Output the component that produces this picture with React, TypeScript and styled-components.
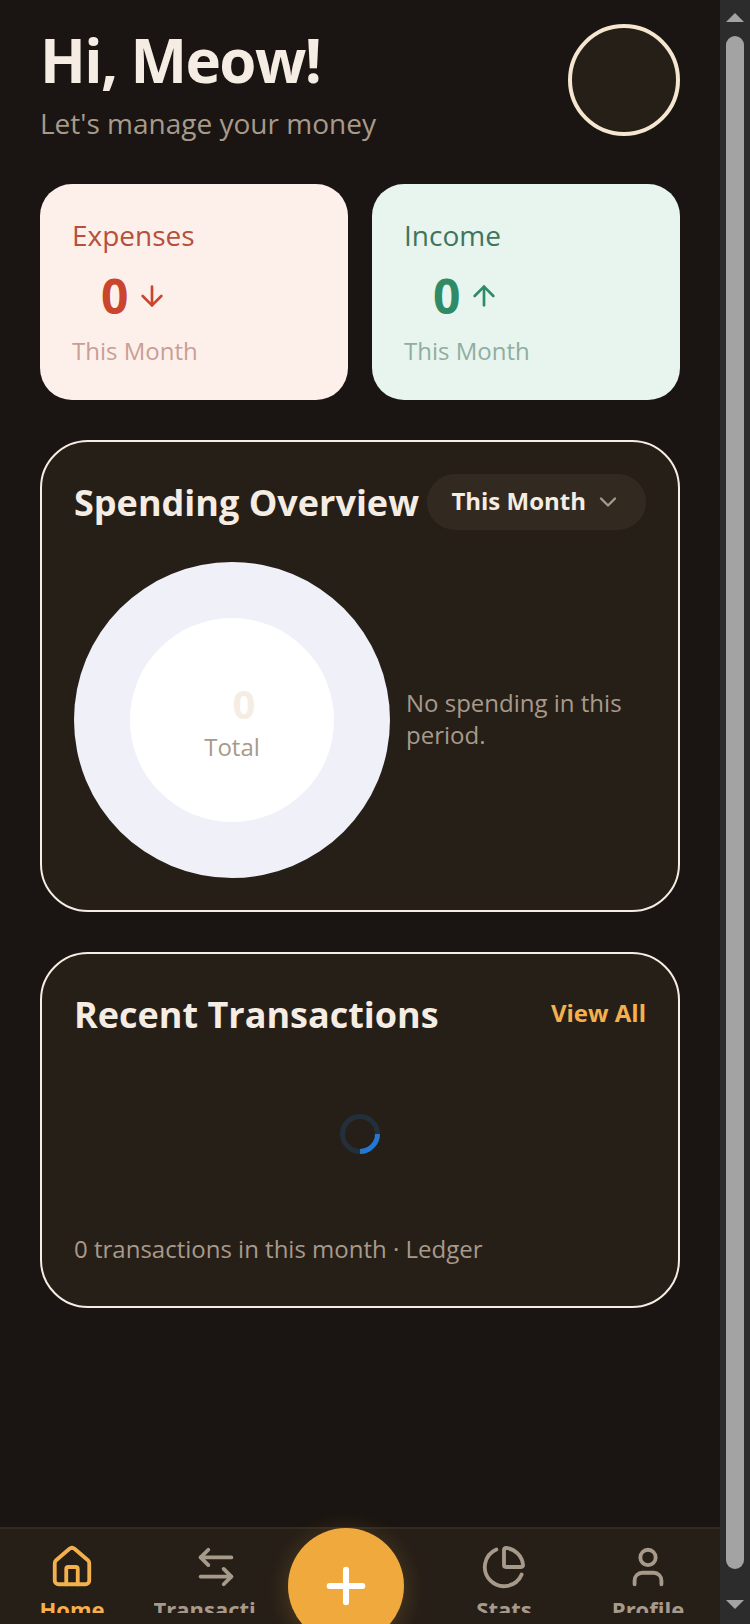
import React from "react";
import styled, { createGlobalStyle } from "styled-components";
import { ArrowDown, ArrowUp, ChevronDown, Plus } from "lucide-react";

const GlobalStyle = createGlobalStyle`
  html, body {
    margin: 0;
    padding: 0;
    background: #1a1512;
  }
  body {
    font-family: "Open Sans", "Liberation Sans", sans-serif;
    overflow: hidden;
  }
`;

const Viewport = styled.div`
  display: flex;
  width: 750px;
  height: 1624px;
  overflow: hidden;
`;

const Page = styled.div`
  width: 720px;
  height: 1624px;
  display: flex;
  flex-direction: column;
  background: #1a1512;
`;

const Content = styled.main`
  flex: 1;
  padding: 0 40px;
  display: flex;
  flex-direction: column;
`;

const Header = styled.header`
  display: flex;
  justify-content: space-between;
  align-items: flex-start;
  padding-top: 24px;
  height: 160px;
  box-sizing: border-box;
`;

const Greeting = styled.h1`
  margin: 0;
  font-size: 60px;
  line-height: 72px;
  font-weight: 700;
  letter-spacing: -1.6px;
  color: #f5ede4;
`;

const Subtitle = styled.p`
  margin: 8px 0 0;
  font-size: 28px;
  line-height: 38px;
  color: #a89a8a;
`;

const Avatar = styled.div`
  width: 112px;
  height: 112px;
  box-sizing: border-box;
  border-radius: 50%;
  border: 4px solid #f5e6d0;
  background: #261f18;
`;

const StatRow = styled.section`
  display: grid;
  grid-template-columns: 1fr 1fr;
  gap: 24px;
  margin-top: 24px;
`;

const StatCard = styled.div<{ $tone: "red" | "green" }>`
  height: 216px;
  box-sizing: border-box;
  border-radius: 32px;
  padding: 32px;
  background: ${(p) => (p.$tone === "red" ? "#fdf0eb" : "#e8f4ee")};
`;

const StatLabel = styled.div<{ $color: string }>`
  font-size: 28px;
  line-height: 38px;
  color: ${(p) => p.$color};
`;

const StatValue = styled.div<{ $color: string }>`
  display: flex;
  align-items: center;
  gap: 8px;
  padding-left: 29px;
  margin-top: 10px;
  font-size: 48px;
  line-height: 64px;
  font-weight: 700;
  color: ${(p) => p.$color};
`;

const StatNote = styled.div<{ $color: string }>`
  font-size: 24px;
  line-height: 32px;
  margin-top: 7px;
  color: ${(p) => p.$color};
`;

const Panel = styled.section<{ $height: number; $gap: number }>`
  box-sizing: border-box;
  height: ${(p) => p.$height}px;
  margin-top: ${(p) => p.$gap}px;
  padding: 32px;
  border-radius: 48px;
  border: 2px solid #f5ede4;
  background: #261f18;
`;

const PanelHead = styled.div`
  display: flex;
  align-items: center;
  justify-content: space-between;
`;

const PanelTitle = styled.h2`
  margin: 0;
  padding-top: 2px;
  font-size: 36px;
  line-height: 54px;
  font-weight: 700;
  color: #f5ede4;
  white-space: nowrap;
`;

const PeriodPicker = styled.div`
  display: flex;
  align-items: center;
  gap: 8px;
  height: 56px;
  box-sizing: border-box;
  padding: 0 24px;
  border-radius: 28px;
  background: #322a21;
  font-size: 24px;
  line-height: 30px;
  font-weight: 700;
  color: #f5ede4;
  white-space: nowrap;
  svg {
    color: #a89a8a;
  }
`;

const PeriodText = styled.span`
  margin-bottom: 2px;
`;

const ChartRow = styled.div`
  display: flex;
  align-items: center;
  gap: 16px;
  margin-top: 32px;
`;

const Donut = styled.div`
  flex: none;
  width: 316px;
  height: 316px;
  border-radius: 50%;
  background: #eff0f8;
  display: flex;
  align-items: center;
  justify-content: center;
`;

const DonutHole = styled.div`
  width: 204px;
  height: 204px;
  border-radius: 50%;
  background: #ffffff;
  display: flex;
  flex-direction: column;
  align-items: center;
  justify-content: center;
`;

const DonutValue = styled.div`
  font-size: 40px;
  line-height: 54px;
  font-weight: 700;
  color: #f5ede4;
  padding-left: 24px;
  margin-top: -1px;
`;

const DonutLabel = styled.div`
  font-size: 24px;
  line-height: 32px;
  color: #a89a8a;
`;

const EmptyNote = styled.p`
  margin: 0 0 2px;
  font-size: 24px;
  line-height: 32px;
  color: #a89a8a;
`;

const ViewAll = styled.a`
  margin-bottom: 4px;
  font-size: 24px;
  font-weight: 700;
  color: #f4b04c;
`;

const SpinnerBox = styled.div`
  display: flex;
  justify-content: center;
  padding: 48px 0;
  margin-top: 24px;
`;

const Spinner = styled.div`
  width: 40px;
  height: 40px;
  box-sizing: border-box;
  border-radius: 50%;
  border: 5px solid #23303c;
  border-right-color: #2478d2;
  transform: rotate(45deg);
`;

const Footnote = styled.p`
  margin: 31px 0 0;
  font-size: 24px;
  line-height: 32px;
  color: #a89a8a;
`;

const BottomNav = styled.nav`
  position: relative;
  height: 97px;
  box-sizing: border-box;
  border-top: 2px solid #33291f;
  background: #261f18;
  display: grid;
  grid-template-columns: repeat(5, 1fr);
`;

const NavItem = styled.div<{ $active?: boolean }>`
  display: flex;
  flex-direction: column;
  align-items: center;
  height: 84px;
  padding-top: 15px;
  box-sizing: border-box;
  overflow: hidden;
  font-size: 22px;
  line-height: 30px;
  font-weight: 700;
  color: ${(p) => (p.$active ? "#f4b04c" : "#a89a8a")};
`;

const NavIcon = styled.svg`
  width: 46px;
  height: 46px;
  flex: none;
  margin-bottom: 4px;
`;

const NavLabel = styled.span<{ $nudge?: number }>`
  display: block;
  max-width: 101px;
  margin-right: ${(p) => p.$nudge ?? 0}px;
  overflow: hidden;
  white-space: nowrap;
`;

const Fab = styled.button`
  position: absolute;
  left: 288px;
  top: -1px;
  width: 116px;
  height: 116px;
  padding: 0;
  border: none;
  border-radius: 50%;
  background: #f0a93c;
  color: #fff;
  display: flex;
  align-items: center;
  justify-content: center;
  box-shadow: 0 4px 24px rgba(240, 169, 60, 0.22);
`;

const ScrollRail = styled.div`
  width: 30px;
  height: 1624px;
  background: #2c2c2c;
  display: flex;
  flex-direction: column;
  align-items: center;
`;

const RailArrow = styled.div<{ $down?: boolean }>`
  width: 0;
  height: 0;
  border-left: 9px solid transparent;
  border-right: 9px solid transparent;
  ${(p) =>
    p.$down
      ? "border-top: 9px solid #a3a3a3; margin-top: 31px;"
      : "border-bottom: 9px solid #a3a3a3; margin-top: 13px;"}
`;

const RailThumb = styled.div`
  width: 18px;
  height: 1533px;
  margin-top: 14px;
  border-radius: 9px;
  background: #a3a3a3;
`;

const iconProps = {
  viewBox: "0 0 24 24",
  fill: "none",
  stroke: "currentColor",
  strokeWidth: 2,
  strokeLinecap: "round" as const,
  strokeLinejoin: "round" as const,
};

const App = () => {
  return (
    <Viewport>
      <GlobalStyle />
      <Page>
        <Content>
          <Header>
            <div>
              <Greeting>Hi, Meow!</Greeting>
              <Subtitle>Let's manage your money</Subtitle>
            </div>
            <Avatar />
          </Header>
          <StatRow>
            <StatCard $tone="red">
              <StatLabel $color="#b5503c">Expenses</StatLabel>
              <StatValue $color="#c9452e">
                0 <ArrowDown size={32} strokeWidth={2} />
              </StatValue>
              <StatNote $color="#c99e95">This Month</StatNote>
            </StatCard>
            <StatCard $tone="green">
              <StatLabel $color="#3d7560">Income</StatLabel>
              <StatValue $color="#2e8b65">
                0 <ArrowUp size={32} strokeWidth={2} />
              </StatValue>
              <StatNote $color="#8fae9f">This Month</StatNote>
            </StatCard>
          </StatRow>
          <Panel $height={472} $gap={40}>
            <PanelHead>
              <PanelTitle>Spending Overview</PanelTitle>
              <PeriodPicker>
                <PeriodText>This Month</PeriodText>
                <ChevronDown size={28} strokeWidth={2} />
              </PeriodPicker>
            </PanelHead>
            <ChartRow>
              <Donut>
                <DonutHole>
                  <DonutValue>0</DonutValue>
                  <DonutLabel>Total</DonutLabel>
                </DonutHole>
              </Donut>
              <EmptyNote>No spending in this period.</EmptyNote>
            </ChartRow>
          </Panel>
          <Panel $height={356} $gap={40}>
            <PanelHead>
              <PanelTitle>Recent Transactions</PanelTitle>
              <ViewAll>View All</ViewAll>
            </PanelHead>
            <SpinnerBox>
              <Spinner />
            </SpinnerBox>
            <Footnote>0 transactions in this month · Ledger</Footnote>
          </Panel>
        </Content>
        <BottomNav>
          <NavItem $active>
            <NavIcon {...iconProps}>
              <path d="M15 21v-8a1 1 0 0 0-1-1h-4a1 1 0 0 0-1 1v8" />
              <path d="M3 10a2 2 0 0 1 .709-1.528l7-5.999a2 2 0 0 1 2.582 0l7 5.999A2 2 0 0 1 21 10v9a2 2 0 0 1-2 2H5a2 2 0 0 1-2-2z" />
            </NavIcon>
            <NavLabel>Home</NavLabel>
          </NavItem>
          <NavItem>
            <NavIcon {...iconProps}>
              <path d="M8 3 4 7l4 4" />
              <path d="M4 7h16" />
              <path d="m16 21 4-4-4-4" />
              <path d="M20 17H4" />
            </NavIcon>
            <NavLabel $nudge={24}>Transactions</NavLabel>
          </NavItem>
          <div />
          <NavItem>
            <NavIcon {...iconProps}>
              <path d="M21 12c.552 0 1.005-.449.95-.998a10 10 0 0 0-8.953-8.951c-.55-.055-.998.398-.998.95v8a1 1 0 0 0 1 1z" />
              <path d="M21.21 15.89A10 10 0 1 1 8 2.83" />
            </NavIcon>
            <NavLabel>Stats</NavLabel>
          </NavItem>
          <NavItem>
            <NavIcon {...iconProps}>
              <path d="M19 21v-2a4 4 0 0 0-4-4H9a4 4 0 0 0-4 4v2" />
              <circle cx="12" cy="7" r="4" />
            </NavIcon>
            <NavLabel>Profile</NavLabel>
          </NavItem>
          <Fab>
            <Plus size={56} strokeWidth={2.6} />
          </Fab>
        </BottomNav>
      </Page>
      <ScrollRail>
        <RailArrow />
        <RailThumb />
        <RailArrow $down />
      </ScrollRail>
    </Viewport>
  );
};

export default App;
